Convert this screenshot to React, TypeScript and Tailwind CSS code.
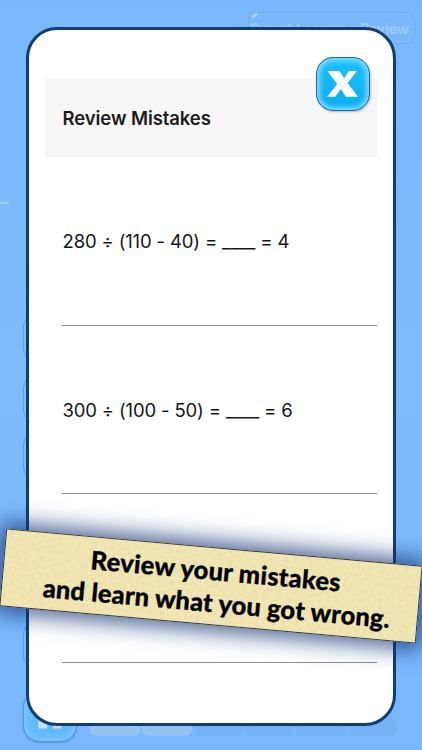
const mistakes = [
  { question: '280 ÷ (110 - 40) =', answer: '4' },
  { question: '300 ÷ (100 - 50) =', answer: '6' },
];

const answerTops = ['top-[313px]', 'top-[374px]', 'top-[431px]', 'top-[620px]'];

function Backdrop() {
  return (
    <div className="absolute inset-0 overflow-hidden bg-linear-to-b from-[#79b7fd] via-[#80bbfe] to-[#79b7fd]">
      <div className="absolute left-[248px] top-[12px] flex h-[32px] w-[167px] items-center justify-end rounded-[10px] border border-[#6eabef] bg-[#7ab6fc] pr-[5px] shadow-[inset_0_0_2px_1px_#84bffe]">
        <span className="whitespace-nowrap text-[14px] font-bold text-[#9ccaff]">Sweet Learning Review</span>
      </div>
      <div className="absolute left-[251px] top-[14px] h-[3px] w-[7px] -rotate-35 rounded-full bg-[#a5d0ff]" />
      <div className="absolute left-0 top-[202px] h-[2px] w-[9px] bg-[#a9d1ff]" />
      {answerTops.map((top) => (
        <div key={top} className={`absolute left-[23px] h-[50px] w-[373px] rounded-[14px] border border-[#5b9de4] ${top}`} />
      ))}
      <div className="absolute left-[23px] top-[690px] h-[52px] w-[54px] rounded-[16px] border border-[#5194d8] bg-[#62b9fa] shadow-[inset_0_0_7px_2px_#84cbff,0_1px_2px_#5a9ee0]">
        <svg viewBox="0 0 54 52" className="h-full w-full" fill="#c2e0ff">
          <path d="M8 24 27 8 46 24H39V39H30V32H24V39H15V24Z" />
        </svg>
      </div>
      <div className="absolute left-[90px] top-[716px] flex h-[20px] gap-[2px]">
        <div className="w-[50px] rounded-[6px] bg-[#91c4f1]" />
        <div className="w-[50px] rounded-[6px] bg-[#91c4f1]" />
        <div className="w-[49px] rounded-[6px] bg-[#76b2f5]" />
        <div className="w-[49px] rounded-[6px] bg-[#76b2f5]" />
        <div className="w-[50px] rounded-[6px] bg-[#76b2f5]" />
        <div className="w-[49px] rounded-[6px] bg-[#76b2f5]" />
      </div>
    </div>
  );
}

function CloseButton() {
  return (
    <button
      aria-label="Close"
      className="absolute left-[287px] top-[27px] h-[54px] w-[54px] rounded-[17px] border-[1.5px] border-[#2c6395] bg-linear-to-b from-[#1cc0fb] to-[#08adf2] shadow-[inset_0_0_5px_3px_#7fdcff,1px_1px_2px_rgba(60,80,110,0.35)]"
    >
      <svg viewBox="0 0 52 52" className="h-full w-full" fill="white">
        <path d="M10.5 13H22.5L27 20.2 32 13H40L30.6 25 41.2 38.7H28.8L23.8 31 18.3 38.7H10L20.2 26.3Z" />
      </svg>
    </button>
  );
}

function Banner() {
  return (
    <div className="absolute left-[2px] top-[547px] h-[78px] w-[418px] rotate-[5.12deg] border border-[#34383d] bg-[#f2e6b4] shadow-[0_0_22px_6px_rgba(15,48,112,0.75)]">
      {/* paper grain */}
      <svg className="absolute inset-0 h-full w-full">
        <filter id="paper" x="0" y="0" width="100%" height="100%">
          <feTurbulence type="fractalNoise" baseFrequency="0.25" numOctaves="3" seed="8" />
          <feColorMatrix values="0 0 0 0 0.76  0 0 0 0 0.66  0 0 0 0 0.38  1.2 0 0 0 -0.47" />
        </filter>
        <rect width="100%" height="100%" filter="url(#paper)" />
      </svg>
      <p className="relative flex h-full flex-col items-center justify-center whitespace-nowrap pl-[7px] font-['Lato','Open_Sans',sans-serif] text-[25.5px] font-black leading-[32px] text-black [-webkit-text-stroke:0.3px_black]">
        <span className="tracking-[0.25px]">Review your mistakes</span>
        <span className="pl-[7px] tracking-[0.15px]">and learn what you got wrong.</span>
      </p>
    </div>
  );
}

export default function App() {
  return (
    <main className="relative h-[750px] w-[422px] overflow-hidden font-['Inter','Liberation_Sans',sans-serif]">
      <Backdrop />
      <div className="relative h-full px-[26px] pb-[24px] pt-[27px]">
        <section className="relative h-full rounded-[31px] border-[3px] border-[#133c74] bg-white px-[16px] pt-[49px]">
          <header className="flex h-[78px] items-center bg-[#f6f6f6] pl-[17.5px]">
            <h1 className="pt-[2px] text-[18.5px] font-semibold tracking-[-0.08px] text-[#1c1c1c]">Review Mistakes</h1>
          </header>
          <ul className="pl-[17px]">
            {mistakes.map(({ question, answer }) => (
              <li key={question} className="flex h-[168.5px] items-center border-b border-[#8f8f8f] pl-[0.5px] pt-[3px] text-[18.5px] tracking-[-0.15px] text-[#161616]">
                <span>{question} ____ = {answer}</span>
              </li>
            ))}
            <li className="h-[168.5px] border-b border-[#8f8f8f]" />
          </ul>
          <CloseButton />
        </section>
      </div>
      <Banner />
    </main>
  );
}
